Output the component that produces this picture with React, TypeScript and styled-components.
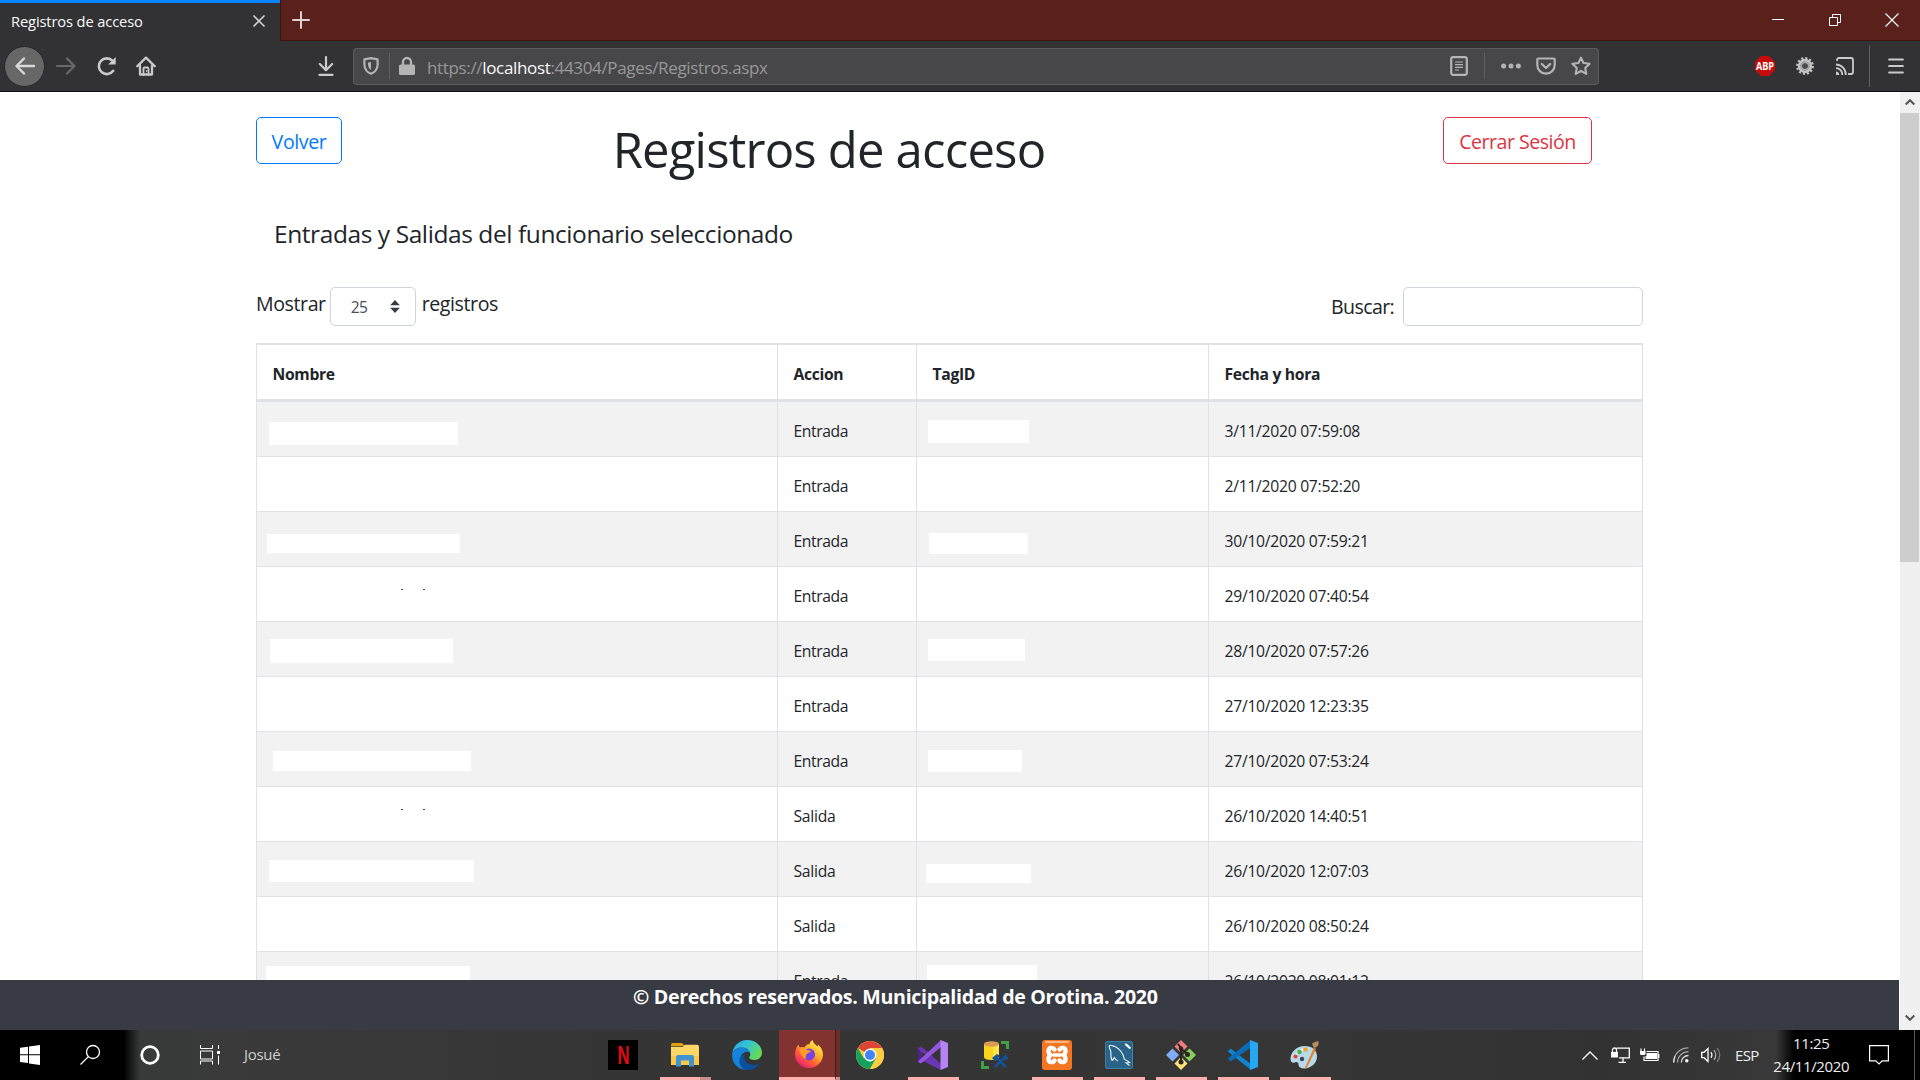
import React from "react";
import styled, { createGlobalStyle } from "styled-components";

const GlobalStyle = createGlobalStyle`
  * { box-sizing: border-box; }
  body {
    margin: 0;
    background: #fff;
    font-family: "Open Sans", "Noto Sans", sans-serif;
    color: #212529;
    overflow: hidden;
  }
`;

const Desktop = styled.div`
  width: 1920px;
  height: 1080px;
  display: flex;
  flex-direction: column;
  overflow: hidden;
`;

const Icon = styled.svg<{ $ml?: number; $mt?: number }>`
  display: block;
  flex: none;
  overflow: visible;
  margin-left: ${(p) => p.$ml ?? 0}px;
  margin-top: ${(p) => p.$mt ?? 0}px;
`;

/* ---------- browser chrome ---------- */

const TitleBar = styled.header`
  height: 41px;
  flex: none;
  display: flex;
  background: #59201c;
`;

const Tab = styled.div`
  width: 280px;
  height: 41px;
  border-top: 3px solid #0a84ff;
  background: #323234;
  display: flex;
  align-items: center;
  padding: 0 14px 2px 11px;
  justify-content: space-between;
  color: #f9f9fa;
  font-size: 14.7px;
  letter-spacing: -0.13px;
`;

const StripRest = styled.div`
  flex: 1;
  display: flex;
  border-left: 1px solid #41130f;
  border-bottom: 1px solid #41130f;
`;

const NavBar = styled.nav`
  height: 51px;
  flex: none;
  display: flex;
  align-items: center;
  background: #323234;
  border-bottom: 1px solid #0c0c0d;
`;

const BackButton = styled.div`
  width: 41px;
  height: 41px;
  margin-left: 4px;
  border-radius: 50%;
  border: 1px solid #262628;
  background: #676768;
  display: flex;
  align-items: center;
  justify-content: center;
`;

const UrlBar = styled.div`
  width: 1246px;
  height: 37px;
  margin-left: 19px;
  display: flex;
  align-items: center;
  background: #474749;
  border: 1px solid #5b5b5d;
  border-radius: 3px;
`;

const Divider = styled.span<{ $h: number; $ml: number }>`
  width: 1px;
  height: ${(p) => p.$h}px;
  margin-left: ${(p) => p.$ml}px;
  background: #5e6066;
`;

const Url = styled.span`
  width: 1023px;
  margin-left: 12px;
  padding-top: 3px;
  color: #98989a;
  font-size: 17px;
  letter-spacing: -0.34px;
  white-space: nowrap;
  b {
    font-weight: 400;
    color: #f9f9fa;
  }
`;

/* ---------- page ---------- */

const Viewport = styled.div`
  height: 938px;
  flex: none;
  display: flex;
`;

const Document = styled.div`
  width: 1900px;
  height: 938px;
  display: flex;
  flex-direction: column;
`;

const Content = styled.main`
  height: 888px;
  flex: none;
  overflow: hidden;
  padding: 25px 0 0 256px;
`;

const Heading = styled.div`
  height: 92px;
  width: 1336px;
  display: flex;
  justify-content: space-between;
  align-items: flex-start;
`;

const OutlineButton = styled.button<{ $color: string; $w: number; $ls: number }>`
  width: ${(p) => p.$w}px;
  height: 47px;
  padding: 1px 0 0;
  background: #fff;
  border: 1px solid ${(p) => p.$color};
  border-radius: 5px;
  color: ${(p) => p.$color};
  font: 400 19.6px "Open Sans", sans-serif;
  letter-spacing: ${(p) => p.$ls}px;
  white-space: nowrap;
`;

const Title = styled.h1`
  margin: 2px 127px 0 0;
  font-size: 49px;
  line-height: 60px;
  font-weight: 400;
  letter-spacing: -0.8px;
  white-space: nowrap;
`;

const Subtitle = styled.h4`
  margin: 0;
  padding-left: 18px;
  height: 78px;
  font-size: 24.5px;
  line-height: 50px;
  font-weight: 400;
  letter-spacing: -0.42px;
`;

const Controls = styled.div`
  width: 1387px;
  height: 56px;
  display: flex;
  justify-content: space-between;
  align-items: flex-start;
  font-size: 19.6px;
  letter-spacing: -0.3px;
`;

const Group = styled.label`
  display: flex;
`;

const ControlText = styled.span<{ $lh: number; $mr?: number; $ls?: number }>`
  line-height: ${(p) => p.$lh}px;
  margin-right: ${(p) => p.$mr ?? 0}px;
  letter-spacing: ${(p) => p.$ls ?? -0.42}px;
`;

const Select = styled.span`
  width: 86px;
  height: 39px;
  margin-right: 6px;
  padding: 0 15px 0 20px;
  display: flex;
  align-items: center;
  justify-content: space-between;
  border: 1px solid #ced4da;
  border-radius: 5px;
  font-size: 15.6px;
  letter-spacing: -0.7px;
  color: #495057;
`;

const SearchBox = styled.input`
  width: 240px;
  height: 39px;
  border: 1px solid #ced4da;
  border-radius: 5px;
  background: #fff;
`;

const Table = styled.div`
  width: 1387px;
  border-left: 1px solid #dee2e6;
`;

const Row = styled.div<{ $odd?: boolean }>`
  display: grid;
  grid-template-columns: 521px 139px 292px 434px;
  height: 55px;
  border-bottom: 1px solid #dee2e6;
  background: ${(p) => (p.$odd ? "#f2f2f2" : "#fff")};
`;

const HeadRow = styled(Row)`
  height: 59px;
  border-top: 2px solid #dee2e6;
  border-bottom: 3px solid #dee2e6;
  font-weight: 700;
`;

const Cell = styled.div<{ $ls?: number }>`
  border-right: 1px solid #dee2e6;
  padding: 2px 0 0 15.5px;
  font-size: 15.7px;
  line-height: 54px;
  letter-spacing: ${(p) => p.$ls ?? -0.27}px;
  white-space: nowrap;
  overflow: hidden;
`;

const BlankCell = styled.div`
  border-right: 1px solid #dee2e6;
  display: flex;
  align-items: flex-start;
`;

const Patch = styled.span<{ $b: Box }>`
  margin: ${(p) => p.$b[1]}px 0 0 ${(p) => p.$b[0]}px;
  width: ${(p) => p.$b[2]}px;
  height: ${(p) => p.$b[3]}px;
  background: #fff;
`;

const Speck = styled.span<{ $ml: number }>`
  width: 2px;
  height: 1px;
  margin: 22px 0 0 ${(p) => p.$ml}px;
  background: #43464c;
`;

const Footer = styled.footer`
  width: 1899px;
  height: 50px;
  background: #393b44;
  color: #fff;
  font-size: 19.6px;
  font-weight: 700;
  line-height: 34px;
  letter-spacing: -0.31px;
  padding-left: 633px;
`;

const Scrollbar = styled.div`
  width: 20px;
  height: 938px;
  background: #f0f0f0;
  display: flex;
  flex-direction: column;
  align-items: center;
`;

const Thumb = styled.div`
  width: 19px;
  height: 449px;
  margin: 8px 1px 451px 0;
  background: #cdcdcd;
`;

/* ---------- taskbar ---------- */

const Taskbar = styled.div`
  height: 50px;
  flex: none;
  display: flex;
  align-items: center;
  background: linear-gradient(90deg, #000 124px, #383a3a 140px, #393a39 220px, #343434 700px, #363636 1300px, #323232 1600px, #383838 1776px, #000 1794px);
  color: #eee;
  font-size: 15px;
`;

const UserName = styled.span`
  width: 355px;
  margin-left: 24px;
  padding-bottom: 2px;
  letter-spacing: -0.3px;
  color: #d0d0d0;
`;

const Task = styled.div<{ $open?: boolean; $active?: boolean; $w?: number; $ml?: number }>`
  width: ${(p) => p.$w ?? 51}px;
  height: 50px;
  margin-left: ${(p) => p.$ml ?? 11}px;
  flex: none;
  display: flex;
  align-items: center;
  justify-content: center;
  border-bottom: 3px solid ${(p) => (p.$open ? "#ffb0ac" : "transparent")};
  padding-top: 3px;
  background: ${(p) => (p.$active ? "#83332f" : "transparent")} padding-box;
  & > svg {
    position: relative;
    left: -1px;
  }
`;

const Stack = styled.div<{ $w: number; $active?: boolean }>`
  width: ${(p) => p.$w}px;
  height: 50px;
  flex: none;
  border-left: ${(p) => (p.$active ? "1px solid #4a1a17" : "none")};
  border-bottom: 3px solid #c98f8c;
  background: ${(p) => (p.$active ? "#6b2e2a" : "transparent")} padding-box;
`;

const Netflix = styled.span`
  width: 30px;
  height: 30px;
  background: #000;
  display: flex;
  align-items: center;
  justify-content: center;
  color: #e50914;
  font: 700 26px/30px "Liberation Sans", sans-serif;
  span {
    display: block;
    transform: scaleX(0.64);
  }
`;

const Tray = styled.div`
  width: 338px;
  margin-left: auto;
  display: flex;
  align-items: center;
`;

const Lang = styled.span`
  margin-left: 13px;
  width: 27px;
  letter-spacing: -0.7px;
`;

const Clock = styled.div`
  width: 80px;
  margin-left: 11px;
  display: flex;
  flex-direction: column;
  align-items: center;
  line-height: 23px;
  letter-spacing: -0.36px;
  padding-bottom: 1px;
`;

const ShowDesktop = styled.div`
  width: 6px;
  height: 50px;
  margin-left: 25px;
  border-left: 1px solid #5a5a5a;
`;

type Box = [number, number, number, number];
interface Entry {
  action: string;
  date: string;
  name?: Box;
  tag?: Box;
  specks?: boolean;
}

const entries: Entry[] = [
  { action: "Entrada", date: "3/11/2020 07:59:08", name: [12, 20, 189, 23], tag: [11, 18, 101, 23] },
  { action: "Entrada", date: "2/11/2020 07:52:20" },
  { action: "Entrada", date: "30/10/2020 07:59:21", name: [10, 22, 193, 19], tag: [12, 21, 99, 21] },
  { action: "Entrada", date: "29/10/2020 07:40:54", specks: true },
  { action: "Entrada", date: "28/10/2020 07:57:26", name: [13, 17, 183, 24], tag: [11, 17, 97, 22] },
  { action: "Entrada", date: "27/10/2020 12:23:35" },
  { action: "Entrada", date: "27/10/2020 07:53:24", name: [16, 19, 198, 20], tag: [11, 18, 94, 22] },
  { action: "Salida", date: "26/10/2020 14:40:51", specks: true },
  { action: "Salida", date: "26/10/2020 12:07:03", name: [12, 18, 205, 22], tag: [9, 22, 105, 19] },
  { action: "Salida", date: "26/10/2020 08:50:24" },
  { action: "Entrada", date: "26/10/2020 08:01:12", name: [9, 14, 204, 22], tag: [10, 13, 110, 22] },
];

const stroke = (color: string, width: number) => ({
  fill: "none",
  stroke: color,
  strokeWidth: width,
  strokeLinecap: "round" as const,
  strokeLinejoin: "round" as const,
});

function Chrome() {
  return (
    <>
      <TitleBar>
        <Tab>
          Registros de acceso
          <Icon width="14" height="14" viewBox="0 0 14 14" {...stroke("#d0d0d1", 1.7)}>
            <path d="M2 2l10 10M12 2L2 12" />
          </Icon>
        </Tab>
        <StripRest>
          <Icon $ml={11} $mt={11} width="18" height="18" viewBox="0 0 18 18" {...stroke("#ddd0cf", 2)}>
            <path d="M9 1v16M1 9h16" />
          </Icon>
          <Icon $ml={1462} $mt={13} width="13" height="13" viewBox="0 0 13 13">
            <path d="M0 6.5h12" stroke="#fff" />
          </Icon>
          <Icon $ml={44} $mt={14} width="12" height="12" viewBox="0 0 12 12" fill="none" stroke="#fff">
            <path d="M.5 3.500h8v8h-8zM3.500 3.500v-3h8v8h-3" />
          </Icon>
          <Icon $ml={44} $mt={13} width="14" height="14" viewBox="0 0 14 14" stroke="#fff" strokeWidth="1.100">
            <path d="M.5 .5l13 13M13.500 .5l-13 13" />
          </Icon>
        </StripRest>
      </TitleBar>
      <NavBar>
        <BackButton>
          <Icon width="20" height="18" viewBox="0 0 20 18" {...stroke("#d7d7d8", 2.400)}>
            <path d="M19 9H2M9 1.500L1.500 9 9 16.500" />
          </Icon>
        </BackButton>
        <Icon $ml={11} width="20" height="18" viewBox="0 0 20 18" {...stroke("#68686a", 2.200)}>
          <path d="M1 9h17M11 1.500L18.500 9 11 16.500" />
        </Icon>
        <Icon $ml={21} width="20" height="20" viewBox="0 0 20 20" {...stroke("#cacacb", 2.600)}>
          <path d="M16.200 14.800A7.900 7.900 0 1 1 15.500 4.800" />
          <path d="M18.700 1v7.500h-7.500z" fill="#cacacb" stroke="none" />
        </Icon>
        <Icon $ml={19} width="20" height="20" viewBox="0 0 20 20" {...stroke("#cacacb", 2.300)}>
          <path d="M1.200 10.300L10 1.600l8.800 8.700M4 9.500v9h12v-9" />
          <path d="M7.500 19v-6.500a1 1 0 0 1 1-1h3a1 1 0 0 1 1 1V19" strokeWidth="1.800" />
          <path d="M10.600 14.500v1" strokeWidth="1.200" />
        </Icon>
        <Icon $ml={162} width="16" height="20" viewBox="0 0 16 20" {...stroke("#cacacb", 2.200)}>
          <path d="M8 1v13M1.800 8L8 14.200 14.200 8M1.500 18.900h13" />
        </Icon>
        <UrlBar>
          <Icon $ml={9} width="16" height="18" viewBox="0 0 16 18" {...stroke("#b4b4b5", 2.200)}>
            <path d="M8 1.200L14.600 2.400v5.200c0 4.500-3 8-6.600 9.200C4.400 15.600 1.400 12.100 1.400 7.600V2.400z" />
            <path d="M8 5v8C6.300 12 5 10 5 7.600V5.500z" fill="#b4b4b5" stroke="none" />
          </Icon>
          <Divider $h={26} $ml={10} />
          <Icon $ml={9} width="16" height="18" viewBox="0 0 16 18">
            <rect x="0" y="7.500" width="16" height="10.500" rx="1.500" fill="#b4b4b5" />
            <path d="M4 8V5a4 4 0 0 1 8 0v3" fill="none" stroke="#b4b4b5" strokeWidth="2.300" />
          </Icon>
          <Url>
            https://<b>localhost</b>:44304/Pages/Registros.aspx
          </Url>
          <Icon width="18" height="20" viewBox="0 0 18 20" {...stroke("#b4b4b5", 2.200)}>
            <rect x="1.200" y="1.200" width="15.600" height="17.600" rx="2" />
            <path d="M5.500 6h7M5.500 8.700h7M5.500 11.300h7M5.500 14h3" strokeWidth="1.200" />
          </Icon>
          <Divider $h={26} $ml={16} />
          <Icon $ml={16} width="20" height="6" viewBox="0 0 20 6" fill="#b4b4b5">
            <circle cx="2.600" cy="3" r="2.500" />
            <circle cx="10" cy="3" r="2.500" />
            <circle cx="17.400" cy="3" r="2.500" />
          </Icon>
          <Icon $ml={15} width="20" height="18" viewBox="0 0 20 18" {...stroke("#b4b4b5", 2.200)}>
            <path d="M1.300 2.500a1 1 0 0 1 1-1h15.400a1 1 0 0 1 1 1V8a8.700 8.700 0 0 1-17.400 0z" />
            <path d="M5.800 7L10 11l4.200-4" strokeWidth="2.400" />
          </Icon>
          <Icon $ml={15} width="20" height="20" viewBox="0 0 20 20" {...stroke("#b4b4b5", 2.100)}>
            <path d="M10 1.600l2.600 5.400 6 .8-4.400 4.100 1.100 6-5.300-2.900-5.300 2.900 1.100-6L1.400 7.800l6-.8z" />
          </Icon>
        </UrlBar>
        <Icon $ml={156} width="20" height="20" viewBox="0 0 20 20">
          <path d="M6 0h8l6 6v8l-6 6H6l-6-6V6z" fill="#c70d0c" />
          <text x="10" y="14" textAnchor="middle" textLength="18" lengthAdjust="spacingAndGlyphs" fontFamily="Open Sans" fontWeight="700" fontSize="11" fill="#fff">
            ABP
          </text>
        </Icon>
        <Icon $ml={20} width="20" height="20" viewBox="0 0 20 20" fill="none">
          <circle cx="10" cy="10" r="7.700" stroke="#c3c3c3" strokeWidth="2.500" strokeDasharray="2.100 1.931" />
          <circle cx="10" cy="10" r="5" stroke="#c3c3c3" strokeWidth="4.400" />
          <circle cx="10" cy="10" r="4.200" stroke="#8c8c8c" strokeWidth="1" />
          <circle cx="10" cy="10" r="2.500" fill="#4b4b4c" />
        </Icon>
        <Icon $ml={21} width="18" height="18" viewBox="0 0 18 18" {...stroke("#cacacb", 1.800)} strokeLinecap="butt">
          <path d="M1 4V3a2 2 0 0 1 2-2h12a2 2 0 0 1 2 2v12a2 2 0 0 1-2 2h-3" />
          <path d="M0 7.500A10 10 0 0 1 9.800 18M0 11.200A6.300 6.300 0 0 1 6.300 18" />
          <path d="M0 14.500A3.500 3.500 0 0 1 3.200 18H0z" fill="#cacacb" stroke="none" />
        </Icon>
        <Divider $h={42} $ml={15} />
        <Icon $ml={18} width="16" height="16" viewBox="0 0 16 16" {...stroke("#cacacb", 2.200)}>
          <path d="M1.200 1.500h13.600M1.200 8h13.600M1.200 14.500h13.600" />
        </Icon>
      </NavBar>
    </>
  );
}

function Page() {
  return (
    <Viewport>
      <Document>
        <Content>
          <Heading>
            <OutlineButton $color="#007bff" $w={86} $ls={-0.4}>
              Volver
            </OutlineButton>
            <Title>Registros de acceso</Title>
            <OutlineButton $color="#dc3545" $w={149} $ls={-0.5}>
              Cerrar Sesión
            </OutlineButton>
          </Heading>
          <Subtitle>Entradas y Salidas del funcionario seleccionado</Subtitle>
          <Controls>
            <Group>
              <ControlText $lh={34} $mr={4}>
                Mostrar
              </ControlText>
              <Select>
                25
                <Icon width="10" height="13" viewBox="0 0 10 13" fill="#343a40">
                  <path d="M5 0l4.800 5.300H.2zM5 13L.2 7.700h9.600z" />
                </Icon>
              </Select>
              <ControlText $lh={34}>registros</ControlText>
            </Group>
            <Group>
              <ControlText $lh={40} $mr={9} $ls={-0.65}>
                Buscar:
              </ControlText>
              <SearchBox />
            </Group>
          </Controls>
          <Table>
            <HeadRow>
              {["Nombre", "Accion", "TagID", "Fecha y hora"].map((label) => (
                <Cell key={label} $ls={-0.32}>
                  {label}
                </Cell>
              ))}
            </HeadRow>
            {entries.map((e, i) => (
              <Row key={e.date} $odd={i % 2 === 0}>
                <BlankCell>
                  {e.name && <Patch $b={e.name} />}
                  {e.specks && (
                    <>
                      <Speck $ml={144} />
                      <Speck $ml={20} />
                    </>
                  )}
                </BlankCell>
                <Cell $ls={e.action === "Entrada" ? -0.42 : -0.27}>{e.action}</Cell>
                <BlankCell>{e.tag && <Patch $b={e.tag} />}</BlankCell>
                <Cell>{e.date}</Cell>
              </Row>
            ))}
          </Table>
        </Content>
        <Footer>© Derechos reservados. Municipalidad de Orotina. 2020</Footer>
      </Document>
      <Scrollbar>
        <Icon $mt={7} $ml={-1} width="10" height="6" viewBox="0 0 10 6" fill="none" stroke="#555" strokeWidth="2">
          <path d="M.7 5.500L5 1.200l4.300 4.300" />
        </Icon>
        <Thumb />
        <Icon $ml={-1} $mt={2} width="10" height="6" viewBox="0 0 10 6" fill="none" stroke="#555" strokeWidth="2">
          <path d="M.7 .5L5 4.800 9.300 .5" />
        </Icon>
      </Scrollbar>
    </Viewport>
  );
}

function Explorer() {
  return (
    <Icon width="28" height="24" viewBox="0 0 28 24">
      <path d="M0 1.500Q0 0 1.500 0h9.500l3 3H0z" fill="#e0a010" />
      <path d="M0 3.800h12l2-2h12q2 0 2 2V22H0z" fill="#ffd766" />
      <path d="M0 13h28v9H0z" fill="#fbc94a" />
      <path d="M5 23.500V14q0-2 2-2h14q2 0 2 2v9.500h-5V17.500h-8v6z" fill="#3f93d2" />
    </Icon>
  );
}

function Edge() {
  return (
    <Icon width="30" height="30" viewBox="0 0 30 30">
      <defs>
        <linearGradient id="edgeTop" x1="0" y1="0" x2="1" y2=".5">
          <stop offset="0" stopColor="#2aa5e8" />
          <stop offset=".5" stopColor="#36c3d4" />
          <stop offset="1" stopColor="#64dc57" />
        </linearGradient>
      </defs>
      <path d="M.3 13C1.500 5.500 7.500 0 15 0c9 0 15 6.200 15 12.500 0 4.500-3.200 7.500-7.500 7.500-3.500 0-5.300-1.300-5.300-2.200 0-.8 1.100-1.300 1.100-3.500C18.300 11 15 7.500 9.800 7.500 5 7.500 1.500 10 .3 13z" fill="url(#edgeTop)" />
      <path d="M.2 13.200C1.500 10 5 7.500 9.800 7.500c4.500 0 7.300 2.300 8.200 5-4-2.300-9.500 1-9.500 6.500 0 5 4 9.500 9.500 10.500C8 31.500-1.200 24 .2 13.200z" fill="#1584d8" />
      <path d="M12.500 14.500c-1.300 7 4.500 10.500 9.500 10.500 3 0 4.500-1.100 5.600-1.700-2 4-6.600 6.700-12 6.700-5 0-8.300-4.500-8.300-9.300 0-3 2.200-5.500 5.200-6.200z" fill="#0c4f9c" />
    </Icon>
  );
}

function Firefox() {
  return (
    <Icon width="28" height="28" viewBox="0 0 28 28">
      <defs>
        <linearGradient id="foxBody" x1=".85" y1=".1" x2=".2" y2="1">
          <stop offset="0" stopColor="#fff044" />
          <stop offset=".35" stopColor="#ffb02a" />
          <stop offset=".65" stopColor="#ff5a36" />
          <stop offset="1" stopColor="#e31587" />
        </linearGradient>
      </defs>
      <path d="M3.500 4.500c.3 1.500 1 2.500 1.500 3 1.500-.6 3-.6 4.500-.1C10.500 5.500 12 4.500 13.500 4c1 0 .5 1 0 2 1.500-1.500 1-4.500 4-6 .5 3 3 4.500 5 6.500.5-.6.500-1.200.300-2C26.500 7.500 28 11 28 14.500 28 22 21.800 28 14 28S0 22 0 14.500C0 10.500 1.300 7 3.500 4.500z" fill="url(#foxBody)" />
      <circle cx="14" cy="14.500" r="6" fill="#7542e5" />
      <path d="M4.500 9c3-1.500 6-1 8 1.200 1.500.2 3 .2 3.500.8-.5 1.500-3 1.800-4 2.800-1.200 1.500-2 3-.5 5-3.500-.2-6-3.500-7-9.800z" fill="#ff9a2b" />
    </Icon>
  );
}

function ChromeLogo() {
  return (
    <Icon width="28" height="28" viewBox="0 0 28 28">
      <circle cx="14" cy="14" r="14" fill="#ffcd42" />
      <path d="M14 14L1.900 7A14 14 0 0 1 26.100 7H14z" fill="#db4437" />
      <path d="M1.900 7A14 14 0 0 0 14 28l6-10.500L14 14 7.900 17.500z" fill="#13a15e" />
      <path d="M14 14V7.500h12.400A14 14 0 0 1 14 28l6-10.500z" fill="#ffcd42" />
      <circle cx="14" cy="14" r="6.400" fill="#f4f4f4" />
      <circle cx="14" cy="14" r="5" fill="#4285f4" />
    </Icon>
  );
}

function VisualStudio() {
  return (
    <Icon width="30" height="30" viewBox="0 0 30 30">
      <path d="M0 8.500L2.500 6.500 7 9.500 23 24v6L4 20.500 2.500 23.500 0 21.500z" fill="#6b35b5" />
      <path d="M3.500 11.500v7L8 15z" fill="#353535" />
      <path d="M0 21.500V8.500l3 3v7z" fill="#52218f" />
      <path d="M2.500 23.500L0 21.500 23 0v7L5 22z" fill="#9556de" />
      <path d="M22.500 0L30 3v24l-7.500 3z" fill="#b683f5" />
    </Icon>
  );
}

function Database() {
  return (
    <Icon width="28" height="28" viewBox="0 0 28 28">
      <path d="M3 3v13q0 3 7.500 3T18 16V3z" fill="#fbd21c" />
      <path d="M12 3h6v13q0 2-6 3z" fill="#ffe44d" />
      <ellipse cx="10.500" cy="3" rx="7.500" ry="2.700" fill="#d99c52" />
      <path d="M20 1.500h6.500V8M1.500 20v6.500H8" fill="none" stroke="#43a047" strokeWidth="3" />
      <path d="M14 26l9-9M25 26l-9-9" fill="none" stroke="#0d55a5" strokeWidth="2.400" />
      <path d="M11 17l5-4 3 2-5 5zM22 16l3-3 .5 2.500 2.500 1-3 2.500z" fill="#0d55a5" />
    </Icon>
  );
}

function Xampp() {
  return (
    <Icon width="30" height="30" viewBox="0 0 30 30">
      <rect width="30" height="30" rx="3" fill="#f37623" />
      <rect x="3" y="1" width="24" height="2" rx="1" fill="#f9b78a" />
      <g fill="none" stroke="#fff" strokeWidth="4.400" strokeLinejoin="round" strokeLinecap="round">
        <path d="M12.500 9.500C11 7 6.500 7.300 6.500 11c0 2 1 3.300 2 4-1 .7-2 2-2 4 0 3.700 4.500 4 6 1.500" />
        <path d="M17.500 9.500C19 7 23.500 7.300 23.500 11c0 2-1 3.300-2 4 1 .7 2 2 2 4 0 3.700-4.500 4-6 1.500" />
        <path d="M11.500 15h7" strokeWidth="3.600" />
      </g>
    </Icon>
  );
}

function MySql() {
  return (
    <Icon width="28" height="28" viewBox="0 0 28 28">
      <rect width="28" height="28" rx="2.500" fill="#2a6388" />
      <rect x=".5" y=".5" width="27" height="27" rx="2" fill="none" stroke="#3d82ab" />
      <path d="M7 19.500C5 15 6.500 12 5.500 9.500 4.500 7 3.500 5.500 4.500 4.500c1.500-1 4 1 5.500 1 5 2.500 8.500 8 9.500 13 2 .5 3.500 1.500 5 3l-3.500.3 3.500 2.700M7 19.500c1.300-.5 1.500-2 2.300-3 1 1.500 2 3 3.500 3.500" fill="none" stroke="#e3eef5" strokeWidth="1.200" />
      <path d="M19.500 2.500l2.500.3 4 4-1.300 1.500-4-3.500z" fill="#fff" />
    </Icon>
  );
}

function GitLogo() {
  return (
    <Icon width="30" height="30" viewBox="0 0 30 30">
      <path d="M15 0l6.500 6.500L15 13 8.500 6.500z" fill="#f27d7d" />
      <path d="M23.500 8.500L30 15l-6.500 6.500L17 15z" fill="#88d05c" />
      <path d="M6.500 8.500L13 15l-6.500 6.500L0 15z" fill="#7fadf7" />
      <path d="M15 17l6.500 6.500L15 30l-6.500-6.500z" fill="#ffe17a" />
      <path d="M12 4l3 4v14M15 8.500l6.500 6" fill="none" stroke="#2c2422" strokeWidth="2" />
      <circle cx="15" cy="8.500" r="2.200" fill="#2c2422" />
      <circle cx="21.500" cy="14.500" r="2.500" fill="#2c2422" />
      <circle cx="15" cy="22" r="2.500" fill="#2c2422" />
    </Icon>
  );
}

function VsCode() {
  return (
    <Icon width="30" height="30" viewBox="0 0 30 30">
      <path d="M0 11l2.500-2.500L23 24v6L1 12.500z" fill="#0f84cf" />
      <path d="M0 19l2.500 2.500L23 7.500V0L1 17.500z" fill="#0a6cb4" />
      <path d="M22 0l8 3v24l-8 3V0z" fill="#27a6f2" />
    </Icon>
  );
}

function Paint() {
  return (
    <Icon width="30" height="28" viewBox="0 0 30 28">
      <path d="M15 5C6.500 5 .5 11 .5 18c0 3 2 4.500 4 3.500 2.500-1.300 4 0 4 2 0 3 3.500 4.500 7 4 6.500-1 11.500-6 11.500-12C27 9 22 5 15 5z" fill="#b7d9ec" />
      <path d="M4 17C6 9 13 6 20 7.500 14 8 8 11 4 17z" fill="#eaf6fd" />
      <circle cx="12" cy="18" r="2.200" fill="#3b474e" />
      <circle cx="5.500" cy="15.500" r="2.100" fill="#e0442c" />
      <circle cx="9.500" cy="11" r="2.300" fill="#4db24a" />
      <circle cx="15.500" cy="8.500" r="2.300" fill="#f4a62a" />
      <path d="M24 6.500l2 1.500-9.500 19.500-1.500-.8z" fill="#e8832a" />
      <path d="M22 2.500C24 1 27.500.3 28.500 0c0 2.500.5 4-1.500 5.800-1 .8-2.500 1.200-3.500 1z" fill="#b78a5c" />
    </Icon>
  );
}

function Bar() {
  return (
    <Taskbar>
      <Icon $ml={20} width="20" height="20" viewBox="0 0 20 20" fill="#fff">
        <path d="M0 2.800l8-1.100v7.600H0zM9 1.500L20 0v9.300H9zM0 10.300h8v7.800L0 17zM9 10.300h11V20L9 18.400z" />
      </Icon>
      <Icon $ml={40} width="20" height="20" viewBox="0 0 20 20" fill="none" stroke="#fff" strokeWidth="1.300">
        <circle cx="13" cy="7" r="6.500" />
        <path d="M8.400 11.600L.5 19.500" />
      </Icon>
      <Icon $ml={40} width="20" height="20" viewBox="0 0 20 20">
        <circle cx="10" cy="10" r="8.300" fill="none" stroke="#fff" strokeWidth="2.800" />
      </Icon>
      <Icon $ml={40} width="20" height="20" viewBox="0 0 20 20" fill="none" stroke="#fff" strokeWidth="1">
        <path d="M.5 0v3.500h12V0M.5 6h12v8h-12zM.5 19.500v-3.500h12v3.500M18.500 0v4M18.500 10.500v9" />
        <path d="M17 6h3v3h-3z" fill="#fff" stroke="none" />
      </Icon>
      <UserName>Josué</UserName>
      <Task $ml={-1} $w={50}>
        <Netflix>
          <span>N</span>
        </Netflix>
      </Task>
      <Task $open $w={40} $ml={12}>
        <Icon as="span" $ml={9}>
          <Explorer />
        </Icon>
      </Task>
      <Stack $w={11} />
      <Task>
        <Edge />
      </Task>
      <Task $open $active $w={56} $ml={6}>
        <Icon as="span" $ml={3} $mt={-2}>
          <Firefox />
        </Icon>
      </Task>
      <Stack $w={5} $active />
      <Task $ml={5}>
        <ChromeLogo />
      </Task>
      <Task $open $ml={12}>
        <VisualStudio />
      </Task>
      <Task>
        <Database />
      </Task>
      <Task $open>
        <Xampp />
      </Task>
      <Task $open>
        <MySql />
      </Task>
      <Task $open>
        <GitLogo />
      </Task>
      <Task $open>
        <VsCode />
      </Task>
      <Task $open>
        <Paint />
      </Task>
      <Tray>
        <Icon width="16" height="9" viewBox="0 0 16 9" fill="none" stroke="#fff" strokeWidth="1.300">
          <path d="M.5 8.500L8 1l7.500 7.500" />
        </Icon>
        <Icon $ml={13} width="19" height="16" viewBox="0 0 19 16" fill="none" stroke="#fff" strokeWidth="1.300">
          <path d="M5.500 1.200h12.800v9.600H8M12 11v4M7.500 15.300h7.500" />
          <path d="M1.500 5V3a2 2 0 0 1 4 0v2" />
          <path d="M0 5h7v5.500H0z" fill="#fff" stroke="none" />
        </Icon>
        <Icon $ml={10} width="20" height="14" viewBox="0 0 20 14" fill="none" stroke="#fff" strokeWidth="1.200">
          <path d="M6.500 3.500h11.500v9h-14V8.500M18.800 6v4M1 .5v2.500M4.500.5v2.500" />
          <path d="M0 3h5.500v2.500q0 1.500-1.500 1.500H1.500Q0 7 0 5.500zM6.500 5H17v6H5.500V8h1z" fill="#fff" stroke="none" />
        </Icon>
        <Icon $ml={13} width="16" height="16" viewBox="0 0 16 16" fill="none" strokeWidth="1.300">
          <path d="M.7 15.500C.7 7 7 .8 15.500.8M4.500 15.500C4.500 9.500 9.300 4.700 15.500 4.700" stroke="#a5a5a5" />
          <path d="M8.300 15.500c0-4 3.200-7 7.200-7M.7 15.500C.7 13 1.200 11 2 9.200" stroke="#ddd" />
          <circle cx="13.800" cy="13.800" r="1.700" fill="#fff" />
        </Icon>
        <Icon $ml={12} width="21" height="16" viewBox="0 0 21 16" fill="none" strokeWidth="1.300">
          <path d="M.7 5.300H3L7 1.500v13L3 10.700H.7z" stroke="#fff" />
          <path d="M10 5.200q1.800 2.800 0 5.600" stroke="#eee" />
          <path d="M13 3q3.500 5 0 10" stroke="#aaa" />
          <path d="M16 .8q5.500 7.200 0 14.400" stroke="#777" />
        </Icon>
        <Lang>ESP</Lang>
        <Clock>
          <span>11:25</span>
          <span>24/11/2020</span>
        </Clock>
        <Icon $ml={19} width="20" height="20" viewBox="0 0 20 20" fill="none" stroke="#fff" strokeWidth="1.200">
          <path d="M.6.6h18.800v15.300h-6.200L10 19l-3.200-3.100H.6z" />
        </Icon>
        <ShowDesktop />
      </Tray>
    </Taskbar>
  );
}

export default function App() {
  return (
    <>
      <GlobalStyle />
      <Desktop>
        <Chrome />
        <Page />
        <Bar />
      </Desktop>
    </>
  );
}
